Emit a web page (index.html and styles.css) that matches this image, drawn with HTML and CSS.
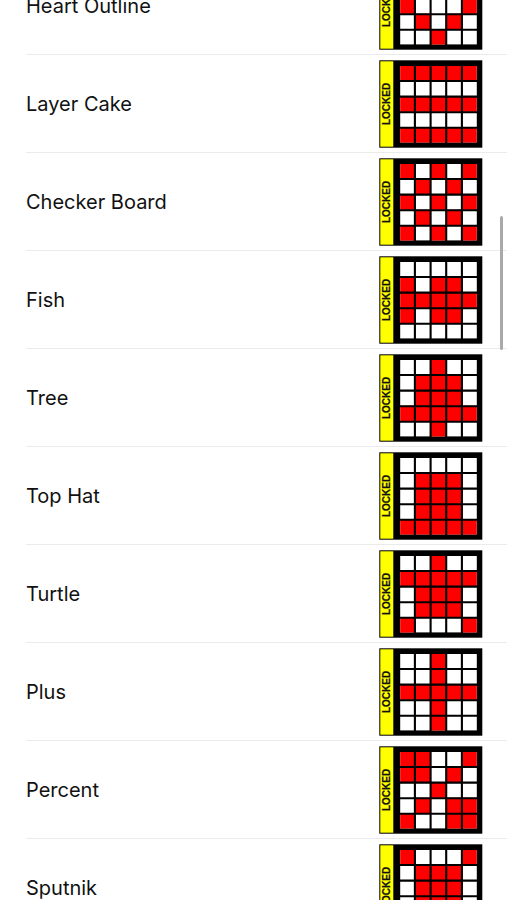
FILE: index.html
```html
<!DOCTYPE html>
<html lang="en">
<head>
<meta charset="utf-8">
<meta name="viewport" content="width=device-width, initial-scale=1">
<title>Patterns</title>
<link rel="stylesheet" href="styles.css">
</head>
<body>
<svg class="defs" aria-hidden="true">
  <defs>
    <!-- Card body: black frame, yellow strip, white 5x5 board -->
    <g id="card">
      <rect x="0.3" y="0.3" width="103" height="87.4" fill="#000"/>
      <rect x="1.3" y="1.3" width="13" height="85.4" fill="#ff0"/>
      <rect x="21.2" y="6" width="76.6" height="76.4" fill="#fff"/>
      <text class="locked" transform="translate(11.4 44) rotate(-90)">LOCKED</text>
    </g>
    <!-- Lines between the cells -->
    <path id="lines" d="M35.9 5v78M51.6 5v78M67.2 5v78M82.9 5v78M20 21h79M20 36.6h79M20 52.2h79M20 67.8h79" stroke="#000" stroke-width="2.1" fill="none"/>
  </defs>
</svg>
<ul class="list">
  <li class="row"><span class="name">Heart Outline</span>
    <svg class="badge" viewBox="0 0 104 88"><use href="#card"/><path class="on" d="M1 0h1v1h-1zM3 0h1v1h-1zM0 1h1v2h-1zM2 1h1v1h-1zM4 1h1v2h-1zM1 3h1v1h-1zM3 3h1v1h-1zM2 4h1v1h-1z"/><use href="#lines"/></svg></li>
  <li class="row"><span class="name">Layer Cake</span>
    <svg class="badge" viewBox="0 0 104 88"><use href="#card"/><path class="on" d="M0 0h5v1h-5zM0 2h5v1h-5zM0 4h5v1h-5z"/><use href="#lines"/></svg></li>
  <li class="row"><span class="name">Checker Board</span>
    <svg class="badge" viewBox="0 0 104 88"><use href="#card"/><path class="on" d="M0 0h1v1h-1zM2 0h1v1h-1zM4 0h1v1h-1zM1 1h1v1h-1zM3 1h1v1h-1zM0 2h1v1h-1zM2 2h1v1h-1zM4 2h1v1h-1zM1 3h1v1h-1zM3 3h1v1h-1zM0 4h1v1h-1zM2 4h1v1h-1zM4 4h1v1h-1z"/><use href="#lines"/></svg></li>
  <li class="row"><span class="name">Fish</span>
    <svg class="badge" viewBox="0 0 104 88"><use href="#card"/><path class="on" d="M0 1h1v3h-1zM1 2h1v1h-1zM2 1h2v3h-2zM4 2h1v1h-1z"/><use href="#lines"/></svg></li>
  <li class="row"><span class="name">Tree</span>
    <svg class="badge" viewBox="0 0 104 88"><use href="#card"/><path class="on" d="M2 0h1v1h-1zM1 1h3v2h-3zM0 3h5v1h-5zM2 4h1v1h-1z"/><use href="#lines"/></svg></li>
  <li class="row"><span class="name">Top Hat</span>
    <svg class="badge" viewBox="0 0 104 88"><use href="#card"/><path class="on" d="M1 1h3v3h-3zM0 4h5v1h-5z"/><use href="#lines"/></svg></li>
  <li class="row"><span class="name">Turtle</span>
    <svg class="badge" viewBox="0 0 104 88"><use href="#card"/><path class="on" d="M2 0h1v1h-1zM0 1h5v1h-5zM1 2h3v2h-3zM0 4h1v1h-1zM4 4h1v1h-1z"/><use href="#lines"/></svg></li>
  <li class="row"><span class="name">Plus</span>
    <svg class="badge" viewBox="0 0 104 88"><use href="#card"/><path class="on" d="M2 0h1v5h-1zM0 2h2v1h-2zM3 2h2v1h-2z"/><use href="#lines"/></svg></li>
  <li class="row"><span class="name">Percent</span>
    <svg class="badge" viewBox="0 0 104 88"><use href="#card"/><path class="on" d="M0 0h2v2h-2zM4 0h1v1h-1zM3 1h1v1h-1zM2 2h1v1h-1zM1 3h1v1h-1zM0 4h1v1h-1zM3 3h2v2h-2z"/><use href="#lines"/></svg></li>
  <li class="row"><span class="name">Sputnik</span>
    <svg class="badge" viewBox="0 0 104 88"><use href="#card"/><path class="on" d="M0 0h1v1h-1zM4 0h1v1h-1zM1 1h3v3h-3zM0 4h1v1h-1zM4 4h1v1h-1z"/><use href="#lines"/></svg></li>
</ul>
<div class="scroll-thumb"></div>
</body>
</html>
```

FILE: styles.css
```css
html,
body {
  height: 100%;
}

body {
  margin: 0;
  overflow: hidden;
  background: #fff;
  color: #111;
  font-family: Inter, "Liberation Sans", sans-serif;
  font-size: 20px;
  line-height: 24px;
}

.defs {
  display: block;
  width: 0;
  height: 0;
}

/* The list is scrolled part of the way through its first row */
.list {
  margin: -43px 0 0;
  padding: 0 0 0 26px;
  list-style: none;
}

.row {
  display: flex;
  align-items: center;
  justify-content: space-between;
  padding: 5px 24px 4px 0;
  border-bottom: 1px solid #ebebeb;
}

.badge {
  display: block;
  flex: none;
  width: 104px;
  height: 88px;
}

.on {
  fill: #f00;
  transform: translate(21.2px, 6px) scale(15.32, 15.28);
}

.locked {
  fill: #111;
  stroke: #111;
  stroke-width: 0.2px;
  font-family: "Liberation Sans", sans-serif;
  font-size: 10px;
  font-weight: 700;
  text-anchor: middle;
}

.scroll-thumb {
  position: absolute;
  top: 216px;
  right: 4px;
  width: 3px;
  height: 134px;
  border-radius: 2px;
  background: #a9a9a9;
}
```
